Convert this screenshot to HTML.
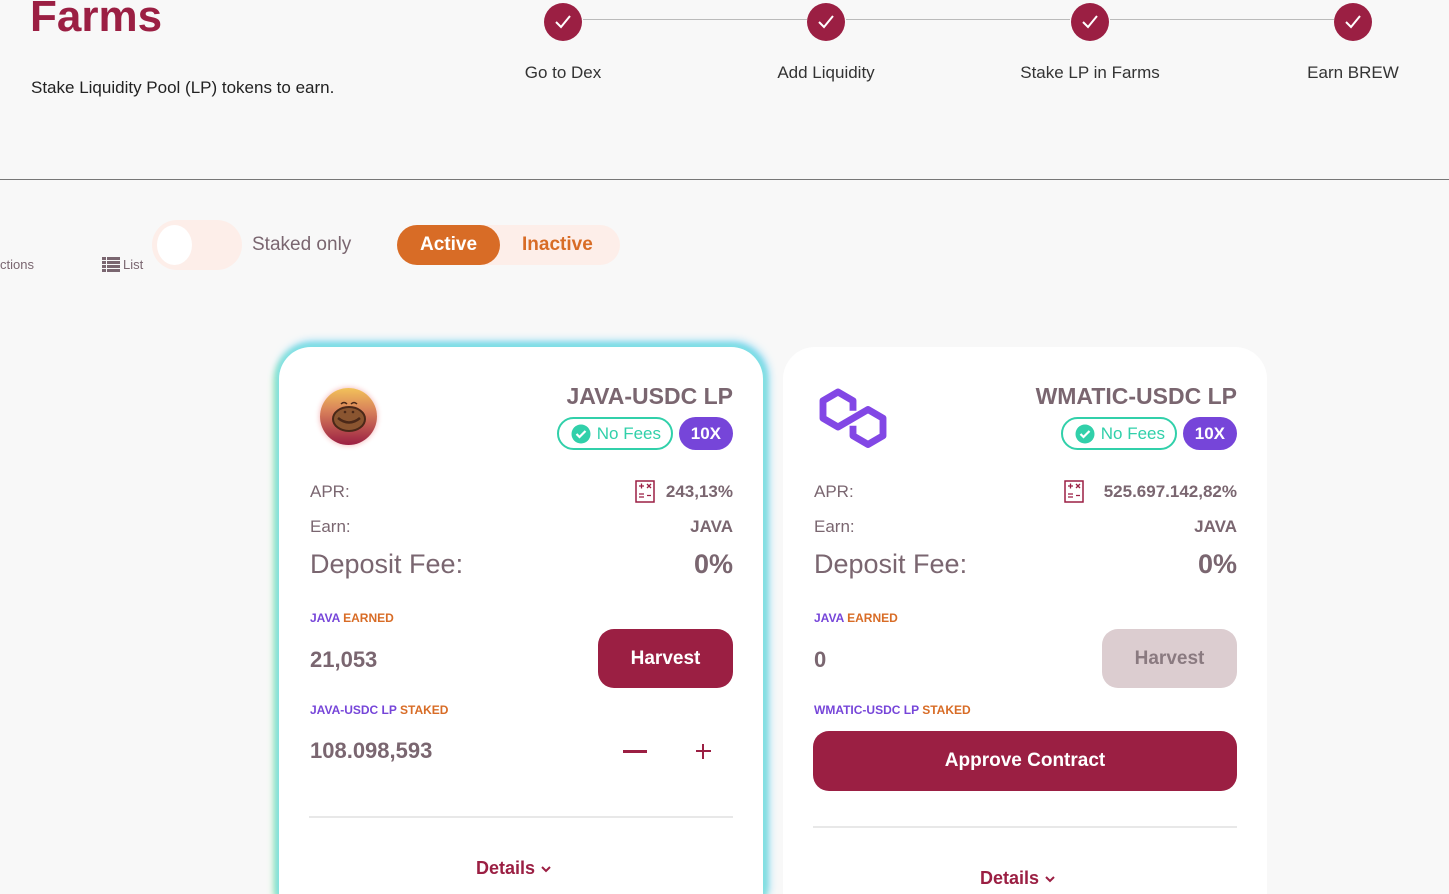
<!DOCTYPE html>
<html><head><meta charset="utf-8"><style>
*{box-sizing:border-box;margin:0;padding:0}
html,body{width:1449px;height:894px;overflow:hidden}
body{background:#f8f8f8;font-family:"Liberation Sans",sans-serif;position:relative;color:#7a6670}
.abs{position:absolute}
h1{position:absolute;left:30px;top:-8px;font-size:44px;font-weight:bold;color:#9b1f43}
.sub{left:31px;top:78px;font-size:17px;color:#222}
.line{left:0;top:179px;width:1449px;height:1px;background:#777}
.step{position:absolute;width:38px;height:38px;border-radius:50%;background:#9b1f43;top:3px}
.step svg{position:absolute;left:9px;top:9px}
.sl{position:absolute;top:63px;font-size:17px;color:#333;transform:translateX(-50%);white-space:nowrap}
.conn{position:absolute;top:19px;height:1px;background:#bbb}
.card{position:absolute;top:347px;width:484px;height:547px;background:#fff;border-radius:32px 32px 0 0}
.c1{left:279px;box-shadow:0 0 6px 3px #7ee0e8,-2px 4px 8px 2px #a8ec9e,2px -2px 10px 2px #5ac8f0}
.c2{left:783px}
.t{position:absolute;white-space:nowrap}
.r{text-align:right;right:30px}
.nf{position:absolute;height:33px;border:2px solid #31d0aa;border-radius:17px;color:#31d0aa;font-size:17px;line-height:29px;padding:0 10px 0 38px;top:70px}
.x10{position:absolute;height:33px;border-radius:17px;background:#7645d9;color:#fff;font-weight:bold;font-size:17px;line-height:33px;padding:0 12px;top:70px;right:30px}
.btn{position:absolute;border-radius:16px;color:#fff;font-weight:bold;font-size:19px;text-align:center}
</style></head><body>
<h1>Farms</h1>
<div class="abs sub">Stake Liquidity Pool (LP) tokens to earn.</div>
<div class="conn" style="left:583px;width:224px"></div>
<div class="conn" style="left:846px;width:224px"></div>
<div class="conn" style="left:1110px;width:224px"></div>
<div class="step" style="left:544px"><svg width="20" height="20" viewBox="0 0 20 20"><path d="M3 10l5 5 9-11" stroke="#fff" stroke-width="2" fill="none"/></svg></div>
<div class="step" style="left:807px"><svg width="20" height="20" viewBox="0 0 20 20"><path d="M3 10l5 5 9-11" stroke="#fff" stroke-width="2" fill="none"/></svg></div>
<div class="step" style="left:1071px"><svg width="20" height="20" viewBox="0 0 20 20"><path d="M3 10l5 5 9-11" stroke="#fff" stroke-width="2" fill="none"/></svg></div>
<div class="step" style="left:1334px"><svg width="20" height="20" viewBox="0 0 20 20"><path d="M3 10l5 5 9-11" stroke="#fff" stroke-width="2" fill="none"/></svg></div>
<div class="sl" style="left:563px">Go to Dex</div>
<div class="sl" style="left:826px">Add Liquidity</div>
<div class="sl" style="left:1090px">Stake LP in Farms</div>
<div class="sl" style="left:1353px">Earn BREW</div>
<div class="line abs"></div>

<div class="t" style="left:0;top:257px;font-size:13px">ctions</div>
<svg class="abs" style="left:102px;top:257px" width="18" height="15" viewBox="0 0 18 15" fill="#7a6670"><rect x="0" y="0" width="4" height="3"/><rect x="5" y="0" width="13" height="3"/><rect x="0" y="4" width="4" height="3"/><rect x="5" y="4" width="13" height="3"/><rect x="0" y="8" width="4" height="3"/><rect x="5" y="8" width="13" height="3"/><rect x="0" y="12" width="4" height="3"/><rect x="5" y="12" width="13" height="3"/></svg>
<div class="t" style="left:123px;top:257px;font-size:13px">List</div>
<div class="abs" style="left:152px;top:220px;width:90px;height:50px;border-radius:25px;background:#fdeee9"><div style="position:absolute;left:5px;top:5px;width:35px;height:40px;border-radius:50%;background:#fff"></div></div>
<div class="t" style="left:252px;top:234px;font-size:19px">Staked only</div>
<div class="abs" style="left:397px;top:225px;width:223px;height:40px;border-radius:20px;background:#fdeee9"></div>
<div class="abs" style="left:397px;top:225px;width:103px;height:40px;border-radius:20px;background:#d86c26;color:#fff;font-weight:bold;font-size:19px;text-align:center;line-height:40px">Active</div>
<div class="t" style="left:522px;top:234px;font-size:19px;font-weight:bold;color:#d86c26">Inactive</div>

<div class="card c1">
  <div class="abs" style="left:41px;top:41px;width:57px;height:57px;border-radius:50%;background:linear-gradient(#f2c25a,#d8805a 40%,#9b1f43);box-shadow:0 0 6px #f3b0b0">
    <svg class="abs" style="left:9px;top:9px" width="40" height="40" viewBox="0 0 40 40"><ellipse cx="20" cy="22" rx="16" ry="12" fill="#8a5530" stroke="#4a2818" stroke-width="2"/><path d="M9 21q11 9 22 0" stroke="#4a2818" stroke-width="2.5" fill="none"/><path d="M12 7q3-3 6 0M22 7q3-3 6 0" stroke="#4a2818" stroke-width="1.5" fill="none"/><circle cx="16" cy="15" r="1.3" fill="#4a2818"/><circle cx="24" cy="15" r="1.3" fill="#4a2818"/></svg>
  </div>
  <div class="t r" style="top:36px;font-size:23px;font-weight:bold">JAVA-USDC LP</div>
  <div class="nf" style="right:90px"><svg class="abs" style="left:12px;top:5px" width="20" height="20" viewBox="0 0 20 20"><circle cx="10" cy="10" r="9.5" fill="#31d0aa"/><path d="M5.5 10l3 3 6-6" stroke="#fff" stroke-width="2.2" fill="none"/></svg>No Fees</div>
  <div class="x10">10X</div>
  <div class="t" style="left:31px;top:135px;font-size:17px">APR:</div>
  <svg class="abs" style="left:356px;top:133px" width="20" height="23" viewBox="0 0 20 23"><rect x="1" y="1" width="18" height="21" fill="none" stroke="#9b1f43" stroke-width="1.5"/><path d="M4 6h5M6.5 3.5v5M12 4l4 4M16 4l-4 4M4 14h5M4 17h5M12 15.5h4" stroke="#9b1f43" stroke-width="1.3"/></svg>
  <div class="t r" style="top:135px;font-size:17px;font-weight:bold">243,13%</div>
  <div class="t" style="left:31px;top:170px;font-size:17px">Earn:</div>
  <div class="t r" style="top:170px;font-size:17px;font-weight:bold">JAVA</div>
  <div class="t" style="left:31px;top:202px;font-size:27px">Deposit Fee:</div>
  <div class="t r" style="top:202px;font-size:27px;font-weight:bold">0%</div>
  <div class="t" style="left:31px;top:264px;font-size:12px;font-weight:bold"><span style="color:#7645d9">JAVA</span> <span style="color:#d86c26">EARNED</span></div>
  <div class="t" style="left:31px;top:300px;font-size:22px;font-weight:bold">21,053</div>
  <div class="btn" style="left:319px;top:282px;width:135px;height:59px;line-height:59px;background:#9b1f43">Harvest</div>
  <div class="t" style="left:31px;top:356px;font-size:12px;font-weight:bold"><span style="color:#7645d9">JAVA-USDC LP</span> <span style="color:#d86c26">STAKED</span></div>
  <div class="t" style="left:31px;top:391px;font-size:22px;font-weight:bold">108.098,593</div>
  <div class="abs" style="left:344px;top:403px;width:24px;height:3px;background:#9b1f43"></div>
  <div class="abs" style="left:417px;top:403px;width:15px;height:2px;background:#9b1f43"></div>
  <div class="abs" style="left:423px;top:397px;width:2px;height:15px;background:#9b1f43"></div>
  <div class="abs" style="left:30px;top:469px;width:424px;height:2px;background:#e8e8e8"></div>
  <div class="t" style="left:197px;top:511px;font-size:18px;font-weight:bold;color:#9b1f43">Details <svg width="12" height="10" viewBox="0 0 12 10"><path d="M2 3l4 4 4-4" stroke="#9b1f43" stroke-width="2" fill="none"/></svg></div>
</div>

<div class="card c2">
  <svg class="abs" style="left:30px;top:35px" width="80" height="70" viewBox="0 0 64 56"><path d="M32 23V15L20 8 8 15V29L20 36 44 22 56 29V43L44 50 32 43V35" stroke="#8247e5" stroke-width="5.5" fill="none" stroke-linejoin="round"/></svg>
  <div class="t r" style="top:36px;font-size:23px;font-weight:bold">WMATIC-USDC LP</div>
  <div class="nf" style="right:90px"><svg class="abs" style="left:12px;top:5px" width="20" height="20" viewBox="0 0 20 20"><circle cx="10" cy="10" r="9.5" fill="#31d0aa"/><path d="M5.5 10l3 3 6-6" stroke="#fff" stroke-width="2.2" fill="none"/></svg>No Fees</div>
  <div class="x10">10X</div>
  <div class="t" style="left:31px;top:135px;font-size:17px">APR:</div>
  <svg class="abs" style="left:281px;top:133px" width="20" height="23" viewBox="0 0 20 23"><rect x="1" y="1" width="18" height="21" fill="none" stroke="#9b1f43" stroke-width="1.5"/><path d="M4 6h5M6.5 3.5v5M12 4l4 4M16 4l-4 4M4 14h5M4 17h5M12 15.5h4" stroke="#9b1f43" stroke-width="1.3"/></svg>
  <div class="t r" style="top:135px;font-size:17px;font-weight:bold">525.697.142,82%</div>
  <div class="t" style="left:31px;top:170px;font-size:17px">Earn:</div>
  <div class="t r" style="top:170px;font-size:17px;font-weight:bold">JAVA</div>
  <div class="t" style="left:31px;top:202px;font-size:27px">Deposit Fee:</div>
  <div class="t r" style="top:202px;font-size:27px;font-weight:bold">0%</div>
  <div class="t" style="left:31px;top:264px;font-size:12px;font-weight:bold"><span style="color:#7645d9">JAVA</span> <span style="color:#d86c26">EARNED</span></div>
  <div class="t" style="left:31px;top:300px;font-size:22px;font-weight:bold">0</div>
  <div class="btn" style="left:319px;top:282px;width:135px;height:59px;line-height:59px;background:#dccdd0;color:#8a7a80">Harvest</div>
  <div class="t" style="left:31px;top:356px;font-size:12px;font-weight:bold"><span style="color:#7645d9">WMATIC-USDC LP</span> <span style="color:#d86c26">STAKED</span></div>
  <div class="btn" style="left:30px;top:384px;width:424px;height:60px;line-height:60px;background:#9b1f43">Approve Contract</div>
  <div class="abs" style="left:30px;top:479px;width:424px;height:2px;background:#e8e8e8"></div>
  <div class="t" style="left:197px;top:521px;font-size:18px;font-weight:bold;color:#9b1f43">Details <svg width="12" height="10" viewBox="0 0 12 10"><path d="M2 3l4 4 4-4" stroke="#9b1f43" stroke-width="2" fill="none"/></svg></div>
</div>
</body></html>
